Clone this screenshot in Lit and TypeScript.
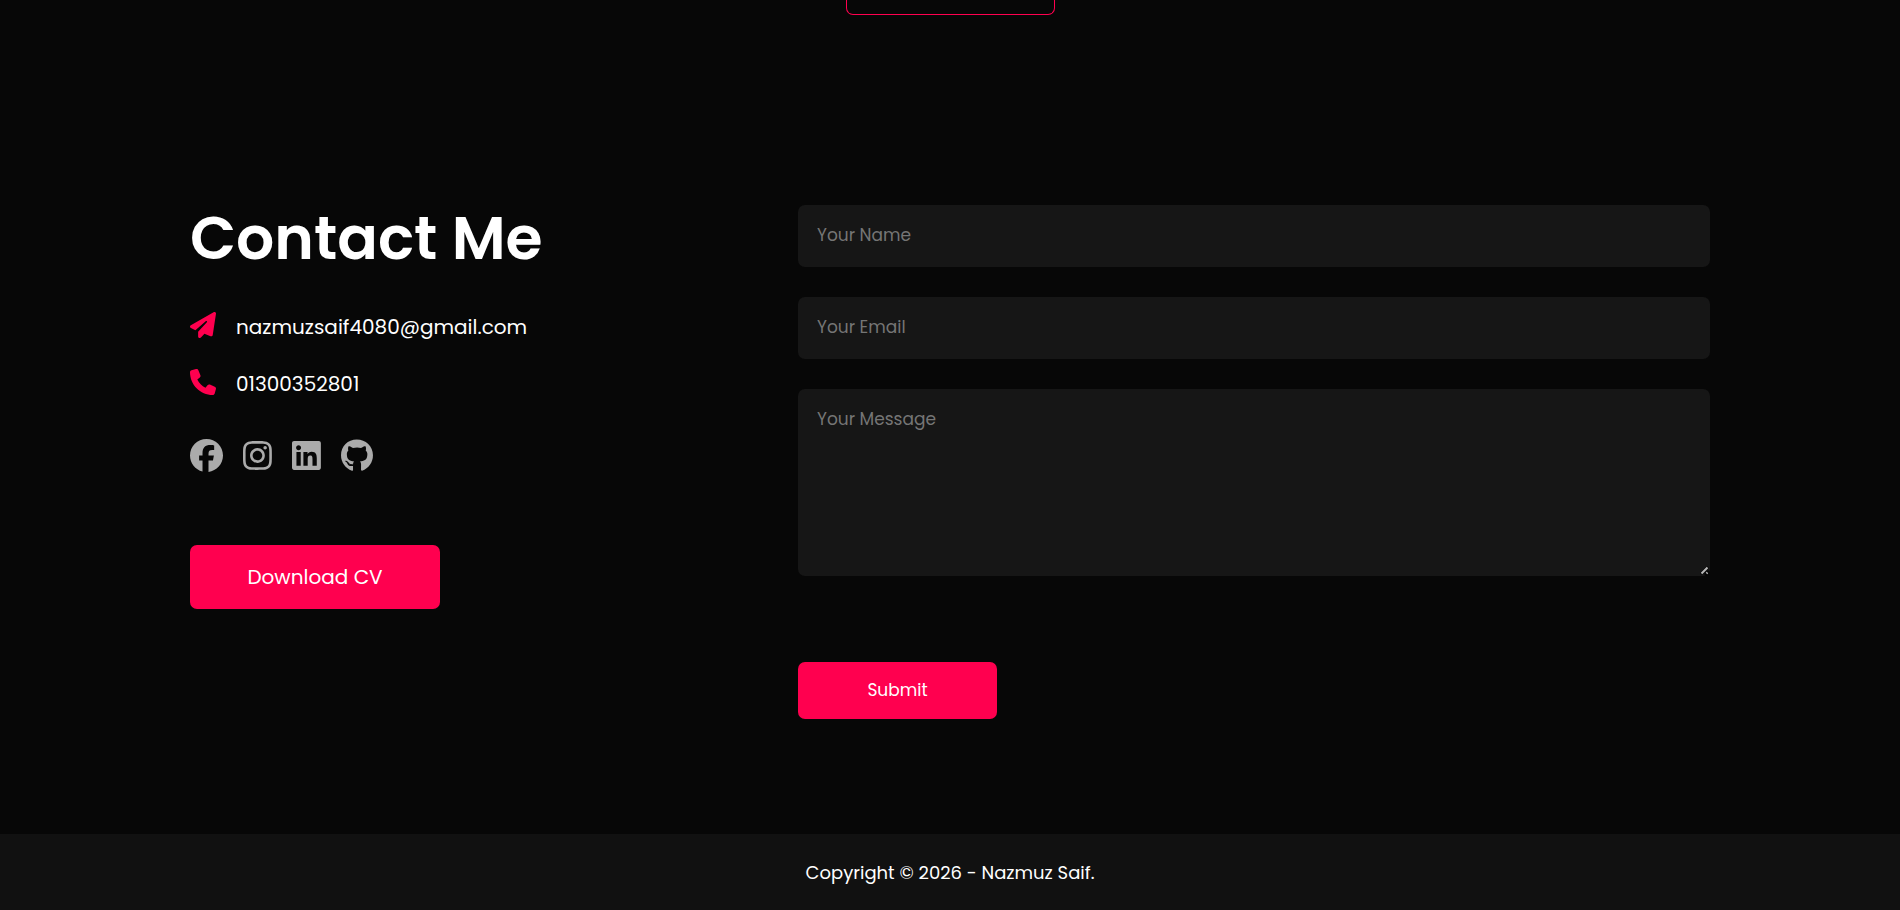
import { LitElement, html, css, svg } from "lit";
import { customElement } from "lit/decorators.js";

const icons = {
  plane: { box: "0 0 512 512", d: "M498.1 5.6c10.1 7 15.4 19.1 13.5 31.2l-64 416c-1.5 9.7-7.4 18.2-16 23s-18.9 5.4-28 1.6L284 427.7l-68.5 74.1c-8.9 9.7-22.9 12.9-35.2 8.1S160 493.2 160 480V396.4c0-4 1.5-7.8 4.2-10.7L331.8 202.8c5.8-6.3 5.6-16-.4-22s-15.7-6.4-22-.7L106 360.8 17.7 316.6C7.1 311.3 .3 300.7 0 288.9s5.9-22.8 16.1-28.7l448-256c10.7-6.1 23.9-5.5 34 1.4z" },
  phone: { box: "0 0 512 512", d: "M164.9 24.6c-7.7-18.6-28-28.5-47.4-23.2l-88 24C12.1 30.2 0 46 0 64C0 311.4 200.6 512 448 512c18 0 33.8-12.1 38.6-29.5l24-88c5.3-19.4-4.6-39.7-23.2-47.4l-96-40c-16.3-6.8-35.2-2.1-46.3 11.6L304.7 368C234.3 334.7 177.3 277.7 144 207.3L193.3 167c13.7-11.2 18.4-30 11.6-46.3l-40-96z" },
  facebook: { box: "0 0 512 512", d: "M512 256C512 114.6 397.4 0 256 0S0 114.6 0 256C0 376 82.7 476.8 194.2 504.5V334.2H141.4V256h52.8V222.3c0-87.1 39.4-127.5 125-127.5c16.2 0 44.2 3.2 55.7 6.4V172c-6-.6-16.5-1-29.6-1c-42 0-58.2 15.9-58.2 57.2V256h83.6l-14.4 78.2H287V510.1C413.8 494.8 512 386.9 512 256z" },
  instagram: { box: "0 0 448 512", d: "M224.1 141c-63.6 0-114.9 51.3-114.9 114.9s51.3 114.9 114.9 114.9S339 319.5 339 255.9 287.7 141 224.1 141zm0 189.6c-41.1 0-74.7-33.5-74.7-74.7s33.5-74.7 74.7-74.7 74.7 33.5 74.7 74.7-33.6 74.7-74.7 74.7zm146.4-194.3c0 14.9-12 26.8-26.8 26.8-14.9 0-26.8-12-26.8-26.8s12-26.8 26.8-26.8 26.8 12 26.8 26.8zm76.1 27.2c-1.7-35.9-9.9-67.7-36.2-93.9-26.2-26.2-58-34.4-93.9-36.2-37-2.1-147.9-2.1-184.9 0-35.8 1.7-67.6 9.9-93.9 36.1s-34.4 58-36.2 93.9c-2.1 37-2.1 147.9 0 184.9 1.7 35.9 9.9 67.7 36.2 93.9s58 34.4 93.9 36.2c37 2.1 147.9 2.1 184.9 0 35.9-1.7 67.7-9.9 93.9-36.2 26.2-26.2 34.4-58 36.2-93.9 2.1-37 2.1-147.8 0-184.8zM398.8 388c-7.8 19.6-22.9 34.7-42.6 42.6-29.5 11.7-99.5 9-132.1 9s-102.7 2.6-132.1-9c-19.6-7.8-34.7-22.9-42.6-42.6-11.7-29.5-9-99.5-9-132.1s-2.6-102.7 9-132.1c7.8-19.6 22.9-34.7 42.6-42.6 29.5-11.7 99.5-9 132.1-9s102.7-2.6 132.1 9c19.6 7.8 34.7 22.9 42.6 42.6 11.7 29.5 9 99.5 9 132.1s2.7 102.7-9 132.1z" },
  linkedin: { box: "0 0 448 512", d: "M416 32H31.9C14.3 32 0 46.5 0 64.3v383.4C0 465.5 14.3 480 31.9 480H416c17.6 0 32-14.5 32-32.3V64.3c0-17.8-14.4-32.3-32-32.3zM135.4 416H69V202.2h66.5V416zm-33.2-243c-21.3 0-38.5-17.3-38.5-38.5S80.9 96 102.2 96c21.2 0 38.5 17.3 38.5 38.5 0 21.3-17.2 38.5-38.5 38.5zm282.1 243h-66.4V312c0-24.8-.5-56.7-34.5-56.7-34.6 0-39.9 27-39.9 54.9V416h-66.4V202.2h63.7v29.2h.9c8.9-16.8 30.6-34.5 62.9-34.5 67.2 0 79.7 44.3 79.7 101.9V416z" },
  github: { box: "0 0 496 512", d: "M165.9 397.4c0 2-2.3 3.6-5.2 3.6-3.3.3-5.6-1.3-5.6-3.6 0-2 2.3-3.6 5.2-3.6 3-.3 5.6 1.3 5.6 3.6zm-31.1-4.5c-.7 2 1.3 4.3 4.3 4.9 2.6 1 5.6 0 6.2-2s-1.3-4.3-4.3-5.2c-2.6-.7-5.5.3-6.2 2.3zm44.2-1.7c-2.9.7-4.9 2.6-4.6 4.9.3 2 2.9 3.3 5.9 2.6 2.9-.7 4.9-2.6 4.6-4.6-.3-1.9-3-3.2-5.9-2.9zM244.8 8C106.1 8 0 113.3 0 252c0 110.9 69.8 205.8 169.5 239.2 12.8 2.3 17.3-5.6 17.3-12.1 0-6.2-.3-40.4-.3-61.4 0 0-70 15-84.7-29.8 0 0-11.4-29.1-27.8-36.6 0 0-22.9-15.7 1.6-15.4 0 0 24.9 2 38.6 25.8 21.9 38.6 58.6 27.5 72.9 20.9 2.3-16 8.8-27.1 16-33.7-55.9-6.2-112.3-14.3-112.3-110.5 0-27.5 7.6-41.3 23.6-58.9-2.6-6.5-11.1-33.3 2.6-67.9 20.9-6.5 69 27 69 27 20-5.6 41.5-8.5 62.8-8.5s42.8 2.9 62.8 8.5c0 0 48.1-33.6 69-27 13.7 34.7 5.2 61.4 2.6 67.9 16 17.7 25.8 31.5 25.8 58.9 0 96.5-58.9 104.2-114.8 110.5 9.2 7.9 17 22.9 17 46.4 0 33.7-.3 75.4-.3 83.6 0 6.5 4.6 14.4 17.3 12.1C428.2 457.8 496 362.9 496 252 496 113.3 383.5 8 244.8 8z" },
};

type IconName = keyof typeof icons;

const icon = (name: IconName, cls: string) => html`
  <svg class=${cls} viewBox=${icons[name].box} aria-hidden="true">${svg`<path d=${icons[name].d}></path>`}</svg>
`;

const socials: IconName[] = ["facebook", "instagram", "linkedin", "github"];

@customElement("app-root")
export class AppRoot extends LitElement {
  static styles = css`
    :host {
      display: block;
      min-height: 100vh;
      background: #070707;
      color: #fff;
      font-family: Poppins, Inter, "Open Sans", sans-serif;
      font-size: 16px;
    }
    * {
      box-sizing: border-box;
      margin: 0;
      padding: 0;
    }
    a {
      color: inherit;
      text-decoration: none;
    }
    svg {
      display: block;
      fill: currentColor;
    }
    .page {
      display: flex;
      flex-direction: column;
      min-height: 100vh;
    }
    .more {
      align-self: center;
      width: 209px;
      height: 15px;
      border: 1px solid #ff004f;
      border-top: 0;
      border-radius: 0 0 7px 7px;
    }
    .contact {
      flex: 1;
      display: grid;
      grid-template-columns: 2fr 3fr;
      align-items: start;
      padding: 190px 10% 115px;
    }
    .title {
      font-size: 60px;
      font-weight: 600;
      line-height: 66px;
    }
    .row {
      display: flex;
      align-items: center;
      gap: 20px;
      height: 57px;
      font-size: 20px;
    }
    .rows {
      padding-top: 27px;
    }
    .row-icon {
      width: 26px;
      height: 26px;
      margin-bottom: 4px;
      color: #ff004f;
    }
    .socials {
      display: flex;
      gap: 20px;
      padding-top: 27px;
      color: #ababab;
    }
    .social-icon {
      height: 33px;
    }
    .btn {
      display: flex;
      align-items: center;
      justify-content: center;
      border: 0;
      border-radius: 7px;
      background: #ff004f;
      color: #fff;
      font-family: inherit;
    }
    .download {
      width: 250px;
      height: 64px;
      margin-top: 73px;
      font-size: 20px;
    }
    .form {
      display: flex;
      flex-direction: column;
      gap: 30px;
    }
    .field {
      display: block;
      width: 100%;
      border: 0;
      outline: none;
      border-radius: 7px;
      background: #161616;
      color: #fff;
      padding: 17px 19px 19px;
      font-family: inherit;
      font-size: 17px;
      line-height: 26px;
    }
    .field::placeholder {
      color: #757575;
    }
    .message {
      height: 187px;
      resize: vertical;
    }
    .message::-webkit-resizer {
      background: url("data:image/svg+xml,%3Csvg xmlns='http://www.w3.org/2000/svg' width='15' height='15'%3E%3Cpath d='M6 13L13 6M10 14L14 10' stroke='%23050505' stroke-width='3'/%3E%3Cpath d='M6.500 12.500L12.500 6.500M11.500 12.500L12.500 11.500' stroke='%23b8b8b8' stroke-width='2'/%3E%3C/svg%3E") right bottom no-repeat;
    }
    .submit {
      width: 199px;
      height: 57px;
      margin-top: 56px;
      padding-bottom: 1px;
      font-size: 17px;
    }
    .footer {
      display: flex;
      align-items: center;
      justify-content: center;
      height: 76px;
      background: #111;
      font-size: 18px;
    }
  `;

  render() {
    return html`
      <div class="page">
        <a class="more" href="#" aria-label="See more"></a>
        <main class="contact">
          <section>
            <h1 class="title">Contact Me</h1>
            <div class="rows">
              <p class="row">${icon("plane", "row-icon")}<span>nazmuzsaif4080@gmail.com</span></p>
              <p class="row">${icon("phone", "row-icon")}<span>01300352801</span></p>
            </div>
            <nav class="socials">
              ${socials.map((name) => html`<a href="#" aria-label=${name}>${icon(name, "social-icon")}</a>`)}
            </nav>
            <a class="btn download" href="#">Download CV</a>
          </section>
          <form class="form">
            <input class="field" type="text" placeholder="Your Name" aria-label="Your Name" />
            <input class="field" type="email" placeholder="Your Email" aria-label="Your Email" />
            <textarea class="field message" placeholder="Your Message" aria-label="Your Message"></textarea>
            <button class="btn submit" type="button">Submit</button>
          </form>
        </main>
        <footer class="footer"><p>Copyright © 2026 - Nazmuz Saif.</p></footer>
      </div>
    `;
  }
}
